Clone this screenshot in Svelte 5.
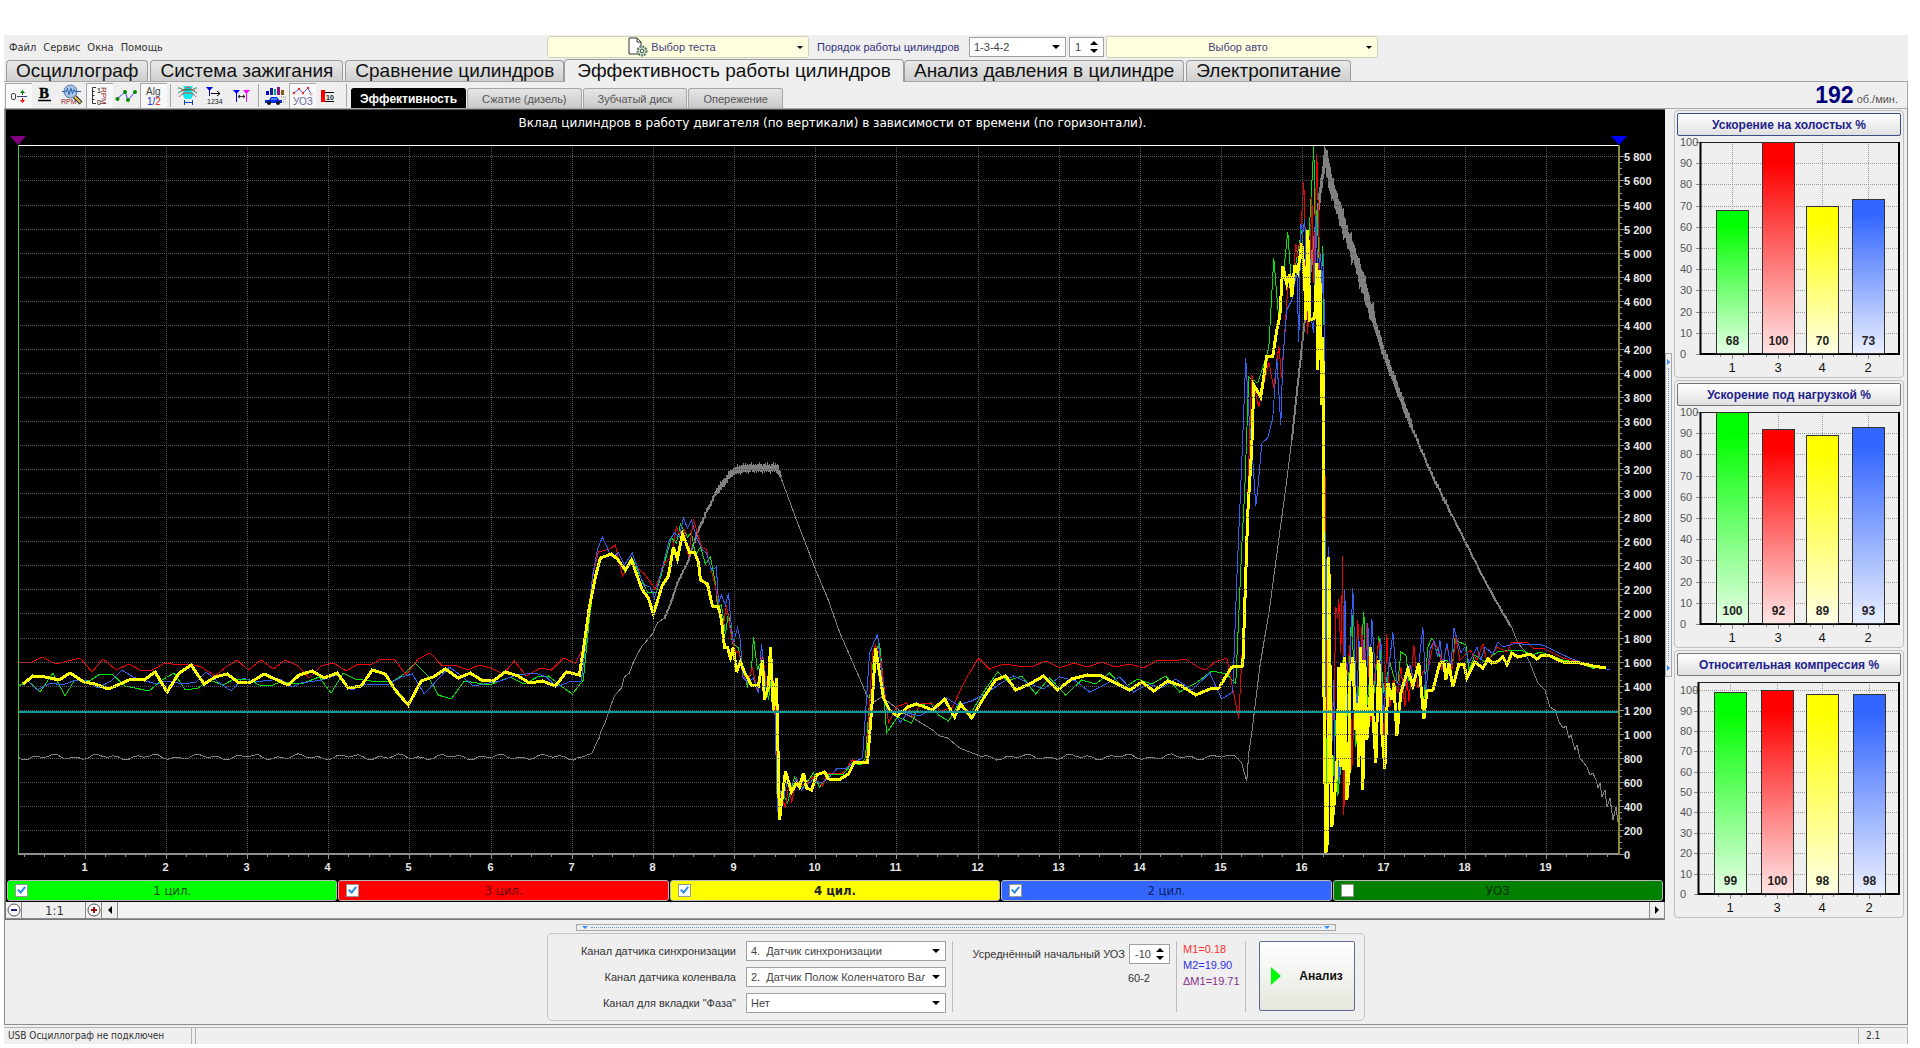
<script>
    let plotW = $state(1658);
    let plotH = $state(769);

    const mainTabs = [
        "Осциллограф", "Система зажигания", "Сравнение цилиндров",
        "Эффективность работы цилиндров", "Анализ давления в цилиндре", "Электропитание"
    ];
    let activeTab = $state("Эффективность работы цилиндров");

    const subTabs = ["Эффективность", "Сжатие (дизель)", "Зубчатый диск", "Опережение"];
    let activeSub = $state("Эффективность");

    let cylinders = $state([
        { name: "1 цил.", cls: "green", on: true },
        { name: "3 цил.", cls: "red", on: true },
        { name: "4 цил.", cls: "yellow", on: true },
        { name: "2 цил.", cls: "blue", on: true },
        { name: "УОЗ", cls: "dark", on: false }
    ]);

    // plot frame inside the black panel
    const padLeft = 12;
    const padRight = 46;
    const padTop = 35;
    const padBottom = 26;
    const tMin = 0.18;
    const tMax = 19.9;
    const rpmMax = 5895;

    let right = $derived(plotW - padRight);
    let bottom = $derived(plotH - padBottom);
    let tx = $derived((t) => Math.round(padLeft + ((t - tMin) / (tMax - tMin)) * (right - padLeft)) + 0.5);
    let ry = $derived((v) => Math.round(bottom - (v / rpmMax) * (bottom - padTop)) + 0.5);

    const seconds = Array.from({ length: 19 }, (_, i) => i + 1);
    const quarters = Array.from({ length: 79 }, (_, i) => (i + 1) * 0.25).filter((t) => t > tMin && t % 1 !== 0);
    const rpms = Array.from({ length: 30 }, (_, i) => i * 200);
    const rpmMinor = Array.from({ length: 117 }, (_, i) => i * 50);

    function fmt(v) {
        return v >= 1000 ? Math.floor(v / 1000) + " " + String(v % 1000).padStart(3, "0") : String(v);
    }

    const traces = {
        red: "19,662 31,663 43,657 57,664 81,658 93,672 104,659 117,670 130,664 141,670 153,670 166,663 179,665 191,664 202,667 216,676 227,667 238,660 249,670 262,660 274,669 286,660 299,666 310,678 322,666 334,663 347,671 359,664 371,665 382,659 395,659 407,675 419,659 431,653 443,666 455,665 468,670 480,665 492,668 504,674 515,661 527,676 541,668 552,670 564,658 576,663 583,650 587,625 594,573 599,552 610,549 616,545 623,576 632,562 645,574 656,589 665,563 672,557 677,527 681,537 685,530 689,557 694,519 702,547 707,550 711,567 716,587 720,610 724,625 727,605 732,637 736,651 740,653 743,673 748,683 753,667 758,692 763,653 767,685 772,670 776,697 778,800 780,793 786,807 790,780 792,803 797,780 801,786 808,783 813,777 823,786 828,773 843,773 853,760 862,763 867,760 873,653 876,645 881,657 885,690 889,723 897,707 907,703 913,717 922,703 932,703 942,711 953,707 960,692 968,676 979,658 990,669 1004,664 1018,666 1032,667 1046,661 1060,668 1074,663 1088,667 1102,662 1116,667 1130,664 1144,668 1158,660 1172,661 1186,659 1198,667 1206,670 1215,662 1227,658 1239,719 1243,640 1247,530 1249,463 1252,375 1259,407 1269,362 1274,388 1279,346 1282,378 1288,287 1292,290 1296,244 1299,263 1304,182 1308,334 1312,197 1314,283 1317,154 1319,230 1321,297 1323,363 1325,450 1327,720 1329,600 1331,690 1334,720 1336,607 1338,618 1339,599 1341,653 1343,556 1344,815 1347,677 1350,645 1352,770 1356,667 1358,620 1361,693 1362,627 1364,720 1367,623 1371,722 1374,683 1379,640 1384,740 1387,634 1390,707 1394,680 1398,693 1401,667 1405,707 1407,677 1409,702 1414,645 1418,688 1423,672 1428,670 1434,641 1440,653 1442,670 1447,645 1452,670 1456,637 1460,660 1470,650 1477,660 1483,644 1487,662 1497,647 1507,652 1512,642 1520,643 1527,642 1533,648 1545,649 1563,658 1587,664 1603,668",
        green: "19,687 28,680 41,692 54,673 66,696 75,681 92,680 101,674 113,674 126,686 150,691 163,680 175,673 186,690 199,688 210,680 224,685 235,679 251,680 260,685 271,686 281,682 302,684 320,677 332,693 344,673 356,679 379,682 394,681 406,673 416,663 428,675 439,695 452,699 465,681 490,685 511,677 525,684 538,677 549,676 563,687 573,694 584,680 590,620 596,573 601,557 610,555 618,557 625,571 633,559 648,592 657,592 664,567 672,538 677,543 681,524 688,537 692,533 696,555 701,547 706,564 711,557 716,583 718,607 722,605 726,634 729,613 733,643 739,648 743,670 748,686 752,670 754,637 758,670 762,660 769,700 773,670 777,740 779,793 783,793 788,803 795,777 803,788 814,773 820,787 830,774 843,775 853,763 862,765 866,757 872,673 876,650 880,644 883,673 887,733 898,717 912,723 920,705 931,703 939,715 949,721 960,702 970,715 984,692 998,672 1008,681 1022,676 1036,694 1050,678 1066,695 1082,680 1096,684 1110,673 1124,688 1138,679 1152,684 1166,676 1180,692 1196,683 1212,671 1227,674 1236,684 1242,547 1245,490 1249,377 1258,383 1263,368 1269,348 1274,258 1279,320 1283,280 1288,232 1292,290 1297,258 1302,230 1306,290 1309,240 1314,146 1315,213 1317,210 1321,297 1323,246 1325,377 1325,600 1327,830 1330,700 1333,780 1336,720 1338,796 1341,767 1343,660 1347,720 1352,609 1356,747 1360,670 1364,612 1367,707 1371,667 1373,707 1379,636 1384,693 1390,663 1395,680 1398,683 1401,652 1406,655 1409,680 1414,680 1418,670 1424,700 1428,647 1432,638 1437,647 1441,660 1447,660 1452,670 1455,640 1466,645 1469,670 1475,655 1485,662 1497,652 1512,650 1523,651 1533,655 1540,652 1550,655 1563,660 1580,663 1595,669",
        blue: "23,685 28,680 38,690 52,683 63,685 77,680 88,681 99,688 112,681 123,670 134,677 157,684 168,681 184,684 197,682 207,672 219,682 232,691 244,678 256,682 281,679 293,687 302,683 323,680 338,675 352,690 367,684 388,685 402,677 413,674 425,694 436,682 450,667 461,675 474,686 501,681 517,675 536,673 547,677 557,687 570,682 582,681 587,640 593,577 598,550 603,537 612,557 619,553 625,565 633,553 644,585 651,587 655,598 663,567 670,540 675,533 680,537 684,518 688,528 692,520 697,537 703,550 707,553 712,570 717,567 719,603 722,595 726,605 729,593 732,627 734,643 738,628 741,640 743,677 748,682 754,678 759,693 762,644 765,673 767,693 772,668 775,693 778,812 781,790 784,798 788,780 793,787 797,778 802,790 813,780 822,783 830,777 838,768 847,768 855,762 863,758 870,653 878,634 882,673 887,710 893,713 901,722 908,713 920,716 930,710 937,708 947,698 958,705 972,701 986,694 1000,684 1014,676 1028,683 1044,689 1060,677 1076,681 1090,692 1106,684 1120,677 1134,692 1148,684 1162,688 1176,679 1192,690 1210,673 1222,699 1233,692 1237,580 1242,463 1246,358 1249,413 1253,460 1256,506 1258,490 1262,443 1268,438 1273,418 1277,358 1281,425 1283,360 1287,310 1292,300 1297,270 1299,342 1301,224 1303,233 1305,219 1307,290 1311,317 1314,333 1316,216 1318,270 1321,253 1322,297 1324,253 1325,490 1326,700 1326,540 1327,640 1329,547 1332,747 1334,680 1335,790 1338,727 1339,783 1342,680 1343,753 1345,590 1347,713 1350,667 1353,588 1357,720 1359,637 1362,713 1364,640 1366,727 1368,623 1370,680 1372,619 1377,697 1381,638 1383,713 1388,677 1393,632 1397,683 1405,687 1410,665 1414,680 1419,663 1423,627 1426,693 1430,650 1434,641 1438,657 1440,640 1443,667 1447,643 1451,667 1454,628 1461,653 1465,647 1469,663 1477,647 1481,660 1485,647 1493,654 1498,642 1503,647 1517,643 1527,645 1538,644 1545,646 1557,652 1572,659 1587,664 1610,670",
        yellow: "24,684 34,676 46,677 60,680 71,673 85,682 96,684 109,689 121,684 132,679 145,680 156,672 168,692 180,673 192,665 205,684 216,677 228,674 240,683 252,682 265,674 289,685 300,675 313,671 325,678 338,673 349,688 362,686 373,670 386,674 396,690 409,705 422,681 434,677 446,669 459,678 471,673 482,680 494,681 506,672 519,676 530,683 543,681 556,686 567,672 580,675 584,650 590,607 596,577 601,558 612,554 618,559 626,570 632,560 643,590 649,598 654,614 663,585 669,576 674,547 678,559 683,534 690,552 695,552 699,562 701,580 708,584 713,606 719,607 722,620 725,647 728,647 731,658 734,647 737,672 741,662 745,672 752,685 759,686 763,660 765,700 769,687 771,647 774,712 777,678 780,820 786,771 792,792 797,783 800,787 804,773 807,788 812,790 817,775 825,772 829,779 839,780 849,774 855,762 868,762 873,697 876,648 880,673 884,698 890,710 898,716 908,707 917,704 933,710 945,699 955,717 961,704 972,718 984,698 996,680 1006,676 1016,690 1030,684 1044,676 1058,690 1072,679 1088,675 1102,676 1116,683 1130,690 1142,682 1154,691 1168,681 1182,686 1196,695 1210,689 1219,688 1232,667 1243,666 1248,513 1252,447 1254,385 1261,397 1267,356 1273,356 1277,330 1280,317 1283,266 1287,284 1290,274 1292,297 1295,265 1298,272 1302,243 1305,283 1306,320 1308,230 1310,320 1315,318 1317,263 1318,370 1320,270 1322,405 1323,337 1324,463 1324,680 1326,853 1328,840 1329,557 1332,827 1334,807 1337,770 1339,667 1341,767 1342,663 1344,770 1345,657 1347,800 1350,763 1350,683 1353,657 1356,730 1357,703 1359,767 1361,647 1363,790 1365,660 1367,740 1370,707 1371,647 1373,713 1376,763 1378,693 1379,660 1382,733 1385,769 1388,683 1392,700 1394,683 1397,736 1401,693 1408,669 1413,686 1419,663 1424,719 1427,691 1433,690 1440,663 1444,662 1446,680 1449,663 1453,687 1459,664 1464,664 1467,678 1475,662 1483,668 1488,659 1492,663 1497,662 1503,657 1507,665 1512,653 1518,657 1530,654 1537,659 1542,655 1548,655 1563,662 1580,663 1593,666 1606,668"
    };

    // idle speed ripple between two x positions
    function ripple(from, to) {
        let out = "";
        for (let x = from; x < to; x += 5) {
            out += `${x},${(757 + Math.sin(x * 0.31) * 1.7 + Math.sin(x * 1.13) * 1.6).toFixed(1)} `;
        }
        return out;
    }

    // thick noisy part of the speed curve
    function noisy(points, amp, width) {
        const pts = points.split(" ").map((p) => p.split(",").map(Number));
        let out = "";
        for (let i = 1; i < pts.length; i++) {
            const [ax, ay] = pts[i - 1];
            const [bx, by] = pts[i];
            for (let x = ax; x < bx; x++) {
                const d = (x % 2 ? 1 : -1) * amp * (0.6 + 0.4 * Math.sin(x * 2.3));
                out += `${x},${(ay + ((by - ay) * (x - ax)) / (bx - ax) + d).toFixed(1)} `;
            }
        }
        return { points: out, width };
    }

    const speed =
        ripple(19, 582) +
        "583,757 593,753 597,743 600,738 602,730 606,722 610,710 615,696 622,688 625,677 630,673 635,660 642,647 653,634 658,623 665,618 670,607 678,583 688,563 698,533 707,512 717,492 725,482 733,472 742,469 752,468 778,468 782,479 797,520 817,572 828,598 840,632 860,678 867,695 873,703 882,697 893,705 902,712 912,717 933,730 940,736 948,738 960,748 975,754 " +
        ripple(982, 1232) +
        "1235,756 1242,763 1244,771 1247,781 1249,753 1252,733 1260,667 1270,607 1278,547 1287,480 1292,440 1302,347 1310,277 1318,213 1322,180 1325,146 1327,163 1333,190 1343,223 1357,263 1367,297 1383,350 1397,387 1413,430 1433,477 1453,517 1467,545 1483,577 1500,608 1512,628 1518,643 1524,650 1530,663 1538,683 1545,690 1550,707 1555,710 1559,722 1563,728 1566,726 1569,738 1571,735 1575,750 1577,745 1580,758 1587,767 1590,775 1593,773 1596,780 1598,788 1600,783 1602,797 1605,790 1607,807 1610,798 1613,820 1616,807 1618,822";
    const speedNoise = [
        noisy("665,618 670,607 678,583 688,563 698,533 707,512", 1, 2),
        noisy("698,533 707,512 717,492 725,482 733,472", 2, 2),
        noisy("717,492 725,482 733,472 742,469 752,468 778,468 782,479", 2, 3),
        noisy("1292,440 1302,347 1310,277", 1, 2),
        noisy("1308,290 1318,213 1322,180 1325,160", 3, 3),
        noisy("1325,156 1333,190 1343,223 1357,263 1367,297 1375,323", 4, 5),
        noisy("1367,297 1383,350 1397,387 1413,430", 2, 4),
        noisy("1397,387 1413,430 1433,477 1453,517", 2, 2),
        noisy("1433,477 1453,517 1467,545 1483,577 1500,608 1512,628", 1, 2)
    ];

    const charts = [
        { title: "Ускорение на холостых %", focus: true, top: 6, left: 23, max: 100, bars: [68, 100, 70, 73], xs: [55, 101, 145, 191] },
        { title: "Ускорение под нагрузкой %", top: 6, left: 23, max: 100, bars: [100, 92, 89, 93], xs: [55, 101, 145, 191] },
        { title: "Относительная компрессия %", top: 6, left: 21, max: 104, bars: [99, 100, 98, 98], xs: [53, 100, 145, 192] }
    ];
    const barNames = ["1", "3", "4", "2"];
    const barColors = ["#00ff00", "#ff0000", "#ffff00", "#3366ff"];
    const tens = Array.from({ length: 11 }, (_, i) => i * 10);
    const chartBase = 218;

    function barY(chart, v) {
        return Math.round(chartBase - (v / chart.max) * (chartBase - chart.top));
    }

    let firingOrder = $state("1-3-4-2");
    let firstCyl = $state(1);
    let advance = $state(-10);
</script>

<div class="window">
    <header class="menubar">
        <nav class="menu">
            <button>Файл</button>
            <button>Сервис</button>
            <button>Окна</button>
            <button>Помощь</button>
        </nav>
        <button class="picker test">
            <svg width="20" height="20" viewBox="0 0 20 20">
                <path d="M1 1h8l4 4v12H1z" fill="#fff" stroke="#333" />
                <path d="M9 1v4h4" fill="none" stroke="#333" />
                <circle cx="14" cy="14" r="4.5" fill="#cfe0d0" stroke="#5c7a62" stroke-width="2" stroke-dasharray="2 1" />
                <circle cx="14" cy="14" r="1.8" fill="#fff" stroke="#3c5a42" />
            </svg>
            <span>Выбор теста</span>
            <i class="caret"></i>
        </button>
        <label class="order-label" for="order">Порядок работы цилиндров</label>
        <span class="combo order">
            <select id="order" bind:value={firingOrder}>
                <option>1-3-4-2</option>
                <option>1-2-4-3</option>
            </select>
        </span>
        <span class="spin first">
            <input type="number" aria-label="Первый цилиндр" bind:value={firstCyl} />
            <span class="arrows">
                <button aria-label="Больше" onclick={() => firstCyl++}></button>
                <button aria-label="Меньше" class="down" onclick={() => firstCyl--}></button>
            </span>
        </span>
        <button class="picker auto">
            <span>Выбор авто</span>
            <i class="caret"></i>
        </button>
    </header>

    <nav class="tabs">
        {#each mainTabs as tab}
            <button class:active={activeTab === tab} onclick={() => (activeTab = tab)}>{tab}</button>
        {/each}
    </nav>

    <div class="toolbar">
        <button class="tool pressed" aria-label="Ноль">
            <svg viewBox="0 0 27 25">
                <rect x="6.5" y="10.5" width="4" height="6" rx="1.5" fill="none" stroke="#444" />
                <path d="M12 13.5h2" stroke="#444" />
                <path d="M14 13.5h8" stroke="#447" />
                <path d="M17.5 12V9" stroke="#080" /><path d="M15 10l2.5-3 2.5 3z" fill="#080" />
                <path d="M17.5 15v3" stroke="#f00" /><path d="M15 17l2.5 3 2.5-3z" fill="#f00" />
            </svg>
        </button>
        <button class="tool" aria-label="Жирный">
            <svg viewBox="0 0 27 25">
                <text x="7" y="15" font-family="Liberation Serif, serif" font-weight="bold" font-size="15" fill="#000" stroke="#000" stroke-width=".4">B</text>
                <path d="M6 17.5h13" stroke="#000" stroke-width="1.5" />
            </svg>
        </button>
        <button class="tool" aria-label="Масштаб RPM">
            <svg viewBox="0 0 27 25">
                <path d="M15 13l7 7" stroke="#222" stroke-width="4" /><path d="M15 13l6.5 6.5" stroke="#e8c860" stroke-width="2" />
                <circle cx="11.5" cy="8.5" r="6.5" fill="#a9c3e6" stroke="#5a7ba8" />
                <path d="M3 8.5h4l1.5-3 1.5 6 2-6 1.5 5 1.5-4 1 2h6" fill="none" stroke="#235fae" />
                <text x="2" y="21" font-family="Liberation Sans, sans-serif" font-size="7" fill="#902020">RPM</text>
            </svg>
        </button>
        <button class="tool pressed" aria-label="Шкала RPM">
            <svg viewBox="0 0 27 25">
                <path d="M10 4.5H6.5v16H10M6.5 8.5h2M6.5 12.5h2M6.5 16.5h2" fill="none" stroke="#333" />
                <text x="11" y="10" font-family="Liberation Sans, sans-serif" font-size="7" fill="#000">1</text>
                <text x="11" y="22" font-family="Liberation Sans, sans-serif" font-size="7" fill="#000">0</text>
                <text x="4" y="-15" transform="rotate(90)" font-family="Liberation Sans, sans-serif" font-size="8" fill="#902020">RPM</text>
            </svg>
        </button>
        <button class="tool" aria-label="График">
            <svg viewBox="0 0 27 25">
                <path d="M4 16l8-7 3 8 7-8" fill="none" stroke="#4040ff" />
                <circle cx="4.5" cy="16" r="2" fill="#080" /><circle cx="12" cy="9" r="2" fill="#080" />
                <circle cx="15" cy="17" r="2" fill="#080" /><circle cx="22" cy="9" r="2" fill="#080" />
            </svg>
        </button>
        <button class="tool pressed" aria-label="Алгоритм">
            <svg viewBox="0 0 27 25">
                <text x="6" y="12" font-family="Liberation Sans, sans-serif" font-size="10" fill="#444">Alg</text>
                <text x="7" y="22" font-family="Liberation Sans, sans-serif" font-size="10" fill="#2222cc">1/<tspan fill="#e02020">2</tspan></text>
            </svg>
        </button>
        <i class="sep"></i>
        <button class="tool" aria-label="Сглаживание">
            <svg viewBox="0 0 27 25">
                <path d="M9 3h10l-2 4 3 4-3 5h-6l-3-5 3-4z" fill="#10e8f0" />
                <path d="M4 5c5 0 3 3 10 1 6 2 5-1 9-1M4 10c4-3 6-2 10-3s6 1 9 3" fill="none" stroke="#208050" />
                <path d="M5 14c4-5 6-4 9-4s5 0 8 4M7 7c3 2 4-3 7-3s4 5 7 3" fill="none" stroke="#e04040" />
                <path d="M10 19.5h9M10.5 17v5M18.5 17v5" stroke="#1040a0" />
            </svg>
        </button>
        <button class="tool" aria-label="Маркер вправо">
            <svg viewBox="0 0 27 25">
                <path d="M5 4h7l-3.5 4z" fill="#0000e0" /><path d="M8.5 6v7" stroke="#0000e0" />
                <path d="M10 10.5h9M16 8l3 2.5-3 2.5" fill="none" stroke="#000" />
                <text x="6" y="21" font-family="Liberation Sans, sans-serif" font-size="7" fill="#222">1234</text>
            </svg>
        </button>
        <button class="tool" aria-label="Между маркерами">
            <svg viewBox="0 0 27 25">
                <path d="M5 7h7l-3.5 4z" fill="#0000ff" /><path d="M8.5 9v10" stroke="#0000ff" />
                <path d="M15 7h7l-3.5 4z" fill="#ff00ff" /><path d="M18.5 9v10" stroke="#ff00ff" />
                <path d="M10.5 13.5h6M12 12l-2 1.5 2 1.5M15 12l2 1.5-2 1.5" fill="none" stroke="#000" stroke-width=".8" />
            </svg>
        </button>
        <i class="sep"></i>
        <button class="tool" aria-label="Динамика">
            <svg viewBox="0 0 27 25">
                <rect x="4" y="8" width="3" height="4" fill="#0000e0" /><rect x="8" y="5" width="3" height="7" fill="#202090" />
                <rect x="12" y="6" width="2" height="6" fill="#00a0a0" /><rect x="15" y="4" width="3" height="8" fill="#901090" />
                <rect x="19" y="7" width="3" height="5" fill="#806010" />
                <path d="M3 17h4l2-3h6l2 3h3v3H3z" fill="#0030e0" /><path d="M9 16h6" stroke="#9cf" />
                <circle cx="7" cy="20" r="2" fill="#111" /><circle cx="16" cy="20" r="2" fill="#111" />
                <path d="M19 14h5M21 16h4M21 19h4" stroke="#999" stroke-dasharray="1 1" />
            </svg>
        </button>
        <button class="tool pressed" aria-label="УОЗ">
            <svg viewBox="0 0 27 25">
                <path d="M5 10l5-4 4 4 5-5 3 6" fill="none" stroke="#5060ff" />
                <circle cx="5" cy="10" r="1.2" fill="#f02020" /><circle cx="10" cy="6" r="1.2" fill="#f02020" />
                <circle cx="14" cy="10" r="1.2" fill="#f02020" /><circle cx="19" cy="5" r="1.2" fill="#f02020" />
                <circle cx="22" cy="11" r="1.2" fill="#fff" stroke="#888" stroke-width=".6" />
                <text x="4" y="22" font-family="Liberation Sans, sans-serif" font-size="10" fill="#6a6aa0">УОЗ</text>
            </svg>
        </button>
        <button class="tool" aria-label="Столбцы">
            <svg viewBox="0 0 27 25">
                <rect x="5" y="7" width="4" height="12" fill="#f00" />
                <path d="M9 9.5h9M9 18.5h9" stroke="#000" />
                <text x="10" y="17" font-family="Liberation Sans, sans-serif" font-weight="bold" font-size="7" fill="#222">10</text>
            </svg>
        </button>
        <i class="sep"></i>
        <div class="subtabs">
            {#each subTabs as tab}
                <button class:active={activeSub === tab} onclick={() => (activeSub = tab)}>{tab}</button>
            {/each}
        </div>
        <div class="rpm"><strong>192</strong><span>об./мин.</span></div>
    </div>

    <main>
        <section class="plot-col">
            <div class="plot" bind:clientWidth={plotW} bind:clientHeight={plotH}>
                <svg class="scope" width={plotW} height={plotH}>
                    <text class="title" x={plotW / 2 - 3} y="17" text-anchor="middle">Вклад цилиндров в работу двигателя (по вертикали) в зависимости от времени (по горизонтали).</text>

                    <svg x={padLeft} y={padTop} width={right - padLeft} height={bottom - padTop} viewBox="19 145 1600 709" preserveAspectRatio="none">
                        <g class="traces">
                            <polyline points={speed} stroke="#808080" />
                            {#each speedNoise as n}
                                <polyline class="w{n.width}" points={n.points} stroke="#808080" />
                            {/each}
                            {#if cylinders[0].on}<polyline points={traces.green} stroke="#00e400" />{/if}
                            {#if cylinders[1].on}<polyline points={traces.red} stroke="#f00000" />{/if}
                            {#if cylinders[3].on}<polyline points={traces.blue} stroke="#2e62f4" />{/if}
                            {#if cylinders[2].on}<polyline class="w3" points={traces.yellow} stroke="#ffff00" />{/if}
                        </g>
                    </svg>

                    <g class="grid">
                        {#each seconds as s}
                            <line x1={tx(s)} x2={tx(s)} y1={padTop} y2={bottom} />
                        {/each}
                        {#each rpms.slice(1) as v}
                            <line x1={padLeft} x2={right} y1={ry(v)} y2={ry(v)} />
                        {/each}
                    </g>

                    <g class="frame">
                        <line x1={padLeft} x2={right} y1={ry(1192)} y2={ry(1192)} stroke="#139a9a" stroke-width="2" />
                        <line x1={padLeft} x2={right} y1={padTop + 0.5} y2={padTop + 0.5} stroke="#ffffff" />
                        <line x1={padLeft} x2={right} y1={bottom} y2={bottom} stroke="#909090" stroke-width="2" />
                        <line x1={padLeft + 0.5} x2={padLeft + 0.5} y1={padTop} y2={bottom} stroke="#3ccc48" />
                        <line x1={right} x2={right} y1={padTop} y2={bottom} stroke="#8c8a2c" stroke-width="2" />
                    </g>

                    <g class="ticks">
                        {#each quarters as q}
                            <line x1={tx(q)} x2={tx(q)} y1={bottom} y2={bottom + 3} />
                        {/each}
                        {#each rpmMinor as v}
                            <line x1={right} x2={right + 3} y1={ry(v)} y2={ry(v)} />
                        {/each}
                        {#each seconds as s}
                            <line x1={tx(s)} x2={tx(s)} y1={bottom} y2={bottom + 5} />
                            <text x={tx(s) - 1} y={bottom + 17} text-anchor="middle">{s}</text>
                        {/each}
                        {#each rpms as v}
                            <line x1={right} x2={right + 5} y1={ry(v)} y2={ry(v)} />
                            <text x={right + 5} y={ry(v) + 4}>{fmt(v)}</text>
                        {/each}
                    </g>

                    <path d="M{padLeft - 8} {padTop - 9}h16l-8 9z" fill="#800080" />
                    <path d="M{right - 8} {padTop - 9}h16l-8 9z" fill="#0000ff" />
                </svg>
            </div>

            <div class="legend">
                {#each cylinders as c}
                    <label class={c.cls}>
                        <input type="checkbox" bind:checked={c.on} />
                        <span>{c.name}</span>
                    </label>
                {/each}
            </div>

            <div class="zoombar">
                <button aria-label="Уменьшить">
                    <svg width="14" height="14" viewBox="0 0 14 14"><circle cx="7" cy="7" r="6" fill="#fff" stroke="#555" /><path d="M4 7h6" stroke="#202080" stroke-width="2" /></svg>
                </button>
                <span class="ratio">1:1</span>
                <button aria-label="Увеличить">
                    <svg width="14" height="14" viewBox="0 0 14 14"><circle cx="7" cy="7" r="6" fill="#fff" stroke="#555" /><path d="M4 7h6M7 4v6" stroke="#a01010" stroke-width="2" /></svg>
                </button>
                <button class="scroll" aria-label="Влево"><svg width="6" height="8" viewBox="0 0 6 8"><path d="M5 0v8L1 4z" /></svg></button>
                <div class="track"></div>
                <button class="scroll" aria-label="Вправо"><svg width="6" height="8" viewBox="0 0 6 8"><path d="M1 0v8l4-4z" /></svg></button>
            </div>
        </section>

        <div class="vsplit">
            <div class="grip"><i></i><b></b><i></i></div>
        </div>

        <aside>
            {#each charts as chart, ci}
                <div class="card">
                    <button class="card-title" class:focus={chart.focus}>{chart.title}</button>
                    <svg class="bars" width="224" height="238">
                        <defs>
                            {#each barColors as color, i}
                                <linearGradient id="g{ci}{i}" x1="0" y1="0" x2="0" y2="1">
                                    <stop offset="0.1" stop-color={color} />
                                    <stop offset="1" stop-color={color} stop-opacity="0.1" />
                                </linearGradient>
                            {/each}
                        </defs>
                        {#each tens as v}
                            <line class="g" x1={chart.left} x2="222" y1={barY(chart, v) + 0.5} y2={barY(chart, v) + 0.5} />
                            <line class="t" x1={chart.left - 4} x2={chart.left} y1={barY(chart, v) + 0.5} y2={barY(chart, v) + 0.5} />
                            <text class="num" x="3" y={barY(chart, v) + 4}>{v}</text>
                        {/each}
                        {#each chart.xs as x}
                            <line class="g" x1={x + 0.5} x2={x + 0.5} y1={chart.top} y2={chartBase} />
                            <line class="t" x1={x + 0.5} x2={x + 0.5} y1={chartBase} y2={chartBase + 5} />
                            <line class="t" x1={x - 11.5} x2={x - 11.5} y1={chartBase} y2={chartBase + 3} />
                            <line class="t" x1={x + 11.5} x2={x + 11.5} y1={chartBase} y2={chartBase + 3} />
                        {/each}
                        <path d="M{chart.left} {chart.top + 0.5}H222" stroke="#222" />
                        <path d="M{chart.left + 0.5} {chart.top}V{chartBase}H222V{chart.top}" fill="none" stroke="#000" stroke-width="2" />
                        {#each chart.bars as v, i}
                            <rect x={chart.xs[i] - 16} y={barY(chart, v)} width="32" height={chartBase - barY(chart, v)} fill="#fff" />
                            <rect x={chart.xs[i] - 15.5} y={barY(chart, v) + 0.5} width="32" height={chartBase - barY(chart, v) - 1} fill="url(#g{ci}{i})" stroke="#333" />
                            <text class="val" x={chart.xs[i] + 0.5} y={chartBase - 9} text-anchor="middle">{v}</text>
                            <text class="name" x={chart.xs[i]} y={chartBase + 18} text-anchor="middle">{barNames[i]}</text>
                        {/each}
                    </svg>
                </div>
            {/each}
        </aside>
    </main>

    <section class="bottom">
        <div class="hgrip"><i></i><b></b><i></i></div>
        <div class="settings">
            <div class="channels">
                <label for="sync">Канал датчика синхронизации</label>
                <span class="combo"><select id="sync"><option>4.&nbsp; Датчик синхронизации</option></select></span>
                <label for="crank">Канал датчика коленвала</label>
                <span class="combo"><select id="crank"><option>2.&nbsp; Датчик Полож Коленчатого Вала</option></select></span>
                <label for="phase">Канал для вкладки "Фаза"</label>
                <span class="combo"><select id="phase"><option>Нет</option></select></span>
            </div>
            <i class="vline"></i>
            <div class="advance">
                <div class="adv-row">
                    <label for="adv">Усреднённый начальный УОЗ</label>
                    <span class="spin">
                        <input id="adv" type="number" bind:value={advance} />
                        <span class="arrows">
                            <button aria-label="Увеличить УОЗ" onclick={() => advance++}></button>
                            <button aria-label="Уменьшить УОЗ" class="down" onclick={() => advance--}></button>
                        </span>
                    </span>
                </div>
                <span class="wheel">60-2</span>
            </div>
            <i class="vline"></i>
            <div class="markers">
                <span class="m1">M1=0.18</span>
                <span class="m2">M2=19.90</span>
                <span class="dm">ΔM1=19.71</span>
            </div>
            <i class="vline"></i>
            <button class="analyze">
                <svg width="10" height="18" viewBox="0 0 10 18"><path d="M0 0l10 9-10 9z" fill="#0f0" /></svg>
                <span>Анализ</span>
            </button>
        </div>
    </section>

    <footer class="status">
        <span class="state">USB Осциллограф не подключен</span>
        <span class="msg"></span>
        <span class="ver">2.1</span>
    </footer>
</div>

<style>
    :global(body) {
        background: #fff;
    }

    .window {
        display: flex;
        flex-direction: column;
        box-sizing: border-box;
        min-height: calc(100vh - 40px);
        margin: 35px 12px 0 4px;
        background: #efefef;
        font-family: "Liberation Sans", Arial, sans-serif;
        font-size: 11px;
        color: #333;
    }

    button,
    input,
    select {
        font: inherit;
        color: inherit;
        margin: 0;
        padding: 0;
        border: 0;
        background: none;
        box-sizing: border-box;
    }

    .menubar {
        display: flex;
        align-items: center;
        height: 24px;
    }

    .menu {
        display: flex;
        gap: 7px;
        width: 543px;
        padding-left: 5px;
        box-sizing: border-box;
        font-family: "DejaVu Sans Condensed", "DejaVu Sans", sans-serif;
        flex-shrink: 0;
    }

    .picker {
        display: flex;
        align-items: center;
        justify-content: center;
        gap: 3px;
        position: relative;
        height: 22px;
        border: 1px solid #d2d2bc;
        border-radius: 3px;
        background: #ffffdf;
        color: #44447c;
    }

    .test {
        width: 262px;
        padding-right: 12px;
    }

    .auto {
        width: 272px;
        margin-left: 2px;
        padding-right: 8px;
    }

    .caret {
        position: absolute;
        right: 5px;
        top: 9px;
        border: 3px solid transparent;
        border-top-color: #000;
    }

    .order-label {
        width: 152px;
        margin-left: 8px;
        color: #34347c;
        white-space: nowrap;
    }

    .combo {
        display: block;
        position: relative;
        height: 20px;
    }

    .combo select {
        width: 100%;
        height: 100%;
        padding: 0 20px 0 4px;
        appearance: none;
        border: 1px solid #a0a0a0;
        background: #fff;
        color: #444;
    }

    .combo::after {
        content: "";
        position: absolute;
        right: 6px;
        top: 8px;
        border: 4px solid transparent;
        border-top-color: #000;
        pointer-events: none;
    }

    .order {
        width: 97px;
    }

    .spin {
        display: flex;
        align-items: center;
        box-sizing: border-box;
        height: 20px;
        width: 41px;
        border: 1px solid #a0a0a0;
        background: #fff;
        color: #444;
    }

    .first {
        width: 35px;
        margin-left: 3px;
    }

    .spin input {
        flex: 1;
        min-width: 0;
        padding-left: 5px;
        appearance: textfield;
    }

    .spin input::-webkit-inner-spin-button {
        display: none;
    }

    .arrows {
        display: flex;
        flex-direction: column;
        gap: 4px;
        padding-right: 5px;
    }

    .arrows button {
        width: 0;
        height: 0;
        border: 4px solid transparent;
        border-top: 0;
        border-bottom-color: #000;
    }

    .arrows .down {
        border: 4px solid transparent;
        border-bottom: 0;
        border-top-color: #000;
    }

    .tabs {
        display: flex;
        align-items: flex-end;
        gap: 2px;
        height: 22px;
        padding-left: 2px;
        border-bottom: 1px solid #a6a6a6;
        font-size: 19px;
        line-height: 20px;
    }

    .tabs button {
        height: 21px;
        padding: 0 9px;
        border: 1px solid #9c9c9c;
        border-bottom: 0;
        border-radius: 4px 4px 0 0;
        background: linear-gradient(#e9e9e9, #cfcfcf);
        color: #111;
        white-space: nowrap;
    }

    .tabs .active {
        height: 23px;
        margin: 0 -2px -1px;
        padding: 0 12px;
        background: #efefef;
    }

    .toolbar {
        display: flex;
        align-items: center;
        height: 26px;
        padding-left: 1px;
        border-bottom: 1px solid #a6a6a6;
        border-right: 1px solid #a6a6a6;
    }

    .tool {
        width: 27px;
        height: 25px;
        flex-shrink: 0;
    }

    .tool svg {
        display: block;
        width: 27px;
        height: 25px;
    }

    .pressed {
        background: #f8f8f8;
        box-shadow: inset 1px 1px 0 #a8a8a8;
    }

    .sep {
        width: 1px;
        height: 23px;
        margin: 0 3px;
        background: #a8a8a8;
    }

    .subtabs {
        display: flex;
        align-self: flex-end;
        gap: 1px;
        margin-left: 1px;
    }

    .subtabs button {
        height: 20px;
        padding: 0 14px;
        border: 1px solid #a6a6a6;
        border-bottom: 0;
        border-radius: 3px 3px 0 0;
        background: linear-gradient(#e6e6e6, #c9c9c9);
        color: #555;
    }

    .subtabs .active {
        padding: 0 8px;
        background: #000;
        border-color: #000;
        color: #fff;
        font-weight: bold;
        font-size: 12px;
    }

    .rpm {
        display: flex;
        align-items: baseline;
        gap: 3px;
        margin-left: auto;
        padding-right: 9px;
        color: #555;
    }

    .rpm strong {
        font-size: 23px;
        line-height: 24px;
        color: #00007a;
    }

    main {
        display: flex;
        flex: 1;
        border-left: 1px solid #8c8c8c;
        border-right: 1px solid #8c8c8c;
    }

    .plot-col {
        display: flex;
        flex-direction: column;
        flex: 1;
        min-width: 0;
        border-left: 1px solid #777;
        border-top: 1px solid #555;
        border-bottom: 1px solid #777;
    }

    .plot {
        flex: 1;
        min-height: 400px;
        position: relative;
        background: #000;
    }

    .scope {
        position: absolute;
        inset: 0;
        display: block;
    }

    .title {
        font-family: "DejaVu Sans", sans-serif;
        font-size: 12px;
        fill: #fff;
    }

    .traces polyline {
        fill: none;
        stroke-width: 1px;
        vector-effect: non-scaling-stroke;
        shape-rendering: crispEdges;
    }

    .traces .w2 {
        stroke-width: 2px;
    }

    .traces .w3 {
        stroke-width: 3px;
    }

    .traces .w4 {
        stroke-width: 4px;
    }

    .traces .w5 {
        stroke-width: 5px;
    }

    .grid line {
        stroke: #585858;
        stroke-dasharray: 1 1;
    }

    .frame line {
        shape-rendering: crispEdges;
    }

    .ticks line {
        stroke: #909090;
    }

    .ticks text {
        font-size: 11px;
        font-weight: bold;
        fill: #e8e8e8;
    }

    .legend {
        display: grid;
        grid-template-columns: repeat(5, 1fr);
        gap: 1px;
        height: 22px;
        padding: 0 2px 0 1px;
        background: #000;
        font-family: "DejaVu Sans Condensed", "DejaVu Sans", sans-serif;
        font-size: 13px;
    }

    .legend label {
        display: flex;
        align-items: center;
        height: 21px;
        box-sizing: border-box;
        border: 1px solid #b8b8b8;
        border-radius: 3px;
        padding: 0 20px 0 7px;
    }

    .legend span {
        flex: 1;
        text-align: center;
    }

    .legend input {
        appearance: none;
        width: 13px;
        height: 13px;
        border: 1px solid #999;
        background: #fff;
        position: relative;
    }

    .legend input:checked::after {
        content: "";
        position: absolute;
        left: 3px;
        top: 0;
        width: 3px;
        height: 6px;
        border: solid #2a8be8;
        border-width: 0 2px 2px 0;
        transform: rotate(40deg);
    }

    .green {
        background: #00ff00;
        color: #075007;
    }

    .red {
        background: #ff0000;
        color: #600;
    }

    .yellow {
        background: #ffff00;
        color: #222;
        font-weight: bold;
    }

    .blue {
        background: #3366ff;
        color: #0b1f66;
    }

    .dark {
        background: #008000;
        color: #003000;
    }

    .zoombar {
        display: flex;
        height: 17px;
        background: #efefef;
    }

    .zoombar button {
        display: flex;
        align-items: center;
        justify-content: center;
        width: 16px;
        border-right: 1px solid #888;
        border-bottom: 1px solid #888;
    }

    .ratio {
        width: 64px;
        padding-left: 2px;
        box-sizing: border-box;
        border-right: 1px solid #888;
        border-bottom: 1px solid #888;
        font-family: "DejaVu Sans Condensed", "DejaVu Sans", sans-serif;
        font-size: 13px;
        line-height: 18px;
        text-align: center;
    }

    .track {
        flex: 1;
        background: #f3f3f3;
        border-bottom: 1px solid #999;
    }

    .zoombar .track + .scroll {
        border-left: 1px solid #888;
    }

    .vsplit {
        display: flex;
        align-items: center;
        width: 9px;
    }

    .grip {
        display: flex;
        flex-direction: column;
        align-items: center;
        box-sizing: border-box;
        width: 7px;
        height: 324px;
        padding: 5px 0;
        border: 1px solid #a8a8a8;
    }

    .grip b {
        flex: 1;
        margin: 3px 0;
        border-left: 1px dotted #5a9cf0;
    }

    .grip i {
        border: 3px solid transparent;
        border-left-color: #2f8cff;
        border-right-width: 0;
    }

    aside {
        display: flex;
        flex-direction: column;
        gap: 2px;
        padding: 1px 3px 2px 0;
    }

    .card {
        box-sizing: border-box;
        width: 230px;
        height: 268px;
        padding: 2px;
        border: 1px solid #c0c0c0;
        border-radius: 4px;
    }

    .card-title {
        display: block;
        width: 100%;
        height: 23px;
        border: 1px solid #777;
        border-radius: 2px;
        background: linear-gradient(#fff, #e0e0e0);
        color: #22228c;
        font-size: 12px;
        font-weight: bold;
    }

    .focus {
        border-color: #3a5084;
    }

    .bars {
        display: block;
    }

    .bars .g {
        stroke: #999;
        stroke-dasharray: 1 1;
    }

    .bars .t {
        stroke: #888;
    }

    .num {
        font-size: 11px;
        fill: #555;
    }

    .val {
        font-size: 12px;
        font-weight: bold;
        fill: #222;
    }

    .name {
        font-size: 13px;
        fill: #111;
    }

    .bottom {
        display: flex;
        flex-direction: column;
        align-items: center;
        gap: 2px;
        box-sizing: border-box;
        height: 105px;
        padding-top: 4px;
        border: solid #8c8c8c;
        border-width: 0 1px 1px;
    }

    .hgrip {
        display: flex;
        align-items: center;
        box-sizing: border-box;
        width: 760px;
        height: 7px;
        padding: 0 5px;
        border: 1px solid #a8a8a8;
    }

    .hgrip b {
        flex: 1;
        margin: 0 3px;
        border-top: 1px dotted #5a9cf0;
    }

    .hgrip i {
        border: 3px solid transparent;
        border-top-color: #2f8cff;
        border-bottom-width: 0;
    }

    .settings {
        display: flex;
        box-sizing: border-box;
        width: 818px;
        height: 88px;
        padding: 7px 9px 8px 12px;
        border: 1px solid #c6c6c6;
        border-radius: 5px;
    }

    .channels {
        display: grid;
        grid-template-columns: 176px 200px;
        column-gap: 10px;
        row-gap: 6px;
        align-items: center;
        align-content: start;
        justify-items: end;
    }

    .channels .combo {
        width: 200px;
    }

    .channels select {
        text-overflow: clip;
    }

    .vline {
        width: 1px;
        margin: 0 6px;
        background: #bcbcbc;
    }

    .advance {
        display: flex;
        flex-direction: column;
        gap: 8px;
        width: 211px;
        padding-top: 3px;
    }

    .adv-row {
        display: flex;
        align-items: center;
        justify-content: flex-end;
        gap: 4px;
    }

    .wheel {
        align-self: flex-end;
        margin-right: 20px;
    }

    .markers {
        display: flex;
        flex-direction: column;
        width: 56px;
        line-height: 16px;
        white-space: nowrap;
    }

    .m1 {
        color: #ff3030;
    }

    .m2 {
        color: #3030f0;
    }

    .dm {
        color: #8a308a;
    }

    .analyze {
        display: flex;
        align-items: center;
        justify-content: center;
        gap: 18px;
        width: 96px;
        height: 70px;
        margin-left: auto;
        border: 1px solid #5c6c94;
        border-radius: 2px;
        background: linear-gradient(#fff, #e6e6de);
        font-size: 12px;
        font-weight: bold;
        color: #111;
    }

    .status {
        display: flex;
        gap: 3px;
        height: 16px;
        margin-top: 2px;
        border-top: 1px solid #b4b4b4;
        font-family: "DejaVu Sans Condensed", "DejaVu Sans", sans-serif;
        font-size: 10px;
        line-height: 16px;
    }

    .status span {
        padding-left: 4px;
        border-right: 1px solid #b4b4b4;
    }

    .status .state {
        width: 183px;
    }

    .status .msg {
        flex: 1;
        border-left: 1px solid #b4b4b4;
    }

    .status .ver {
        width: 41px;
    }
</style>
